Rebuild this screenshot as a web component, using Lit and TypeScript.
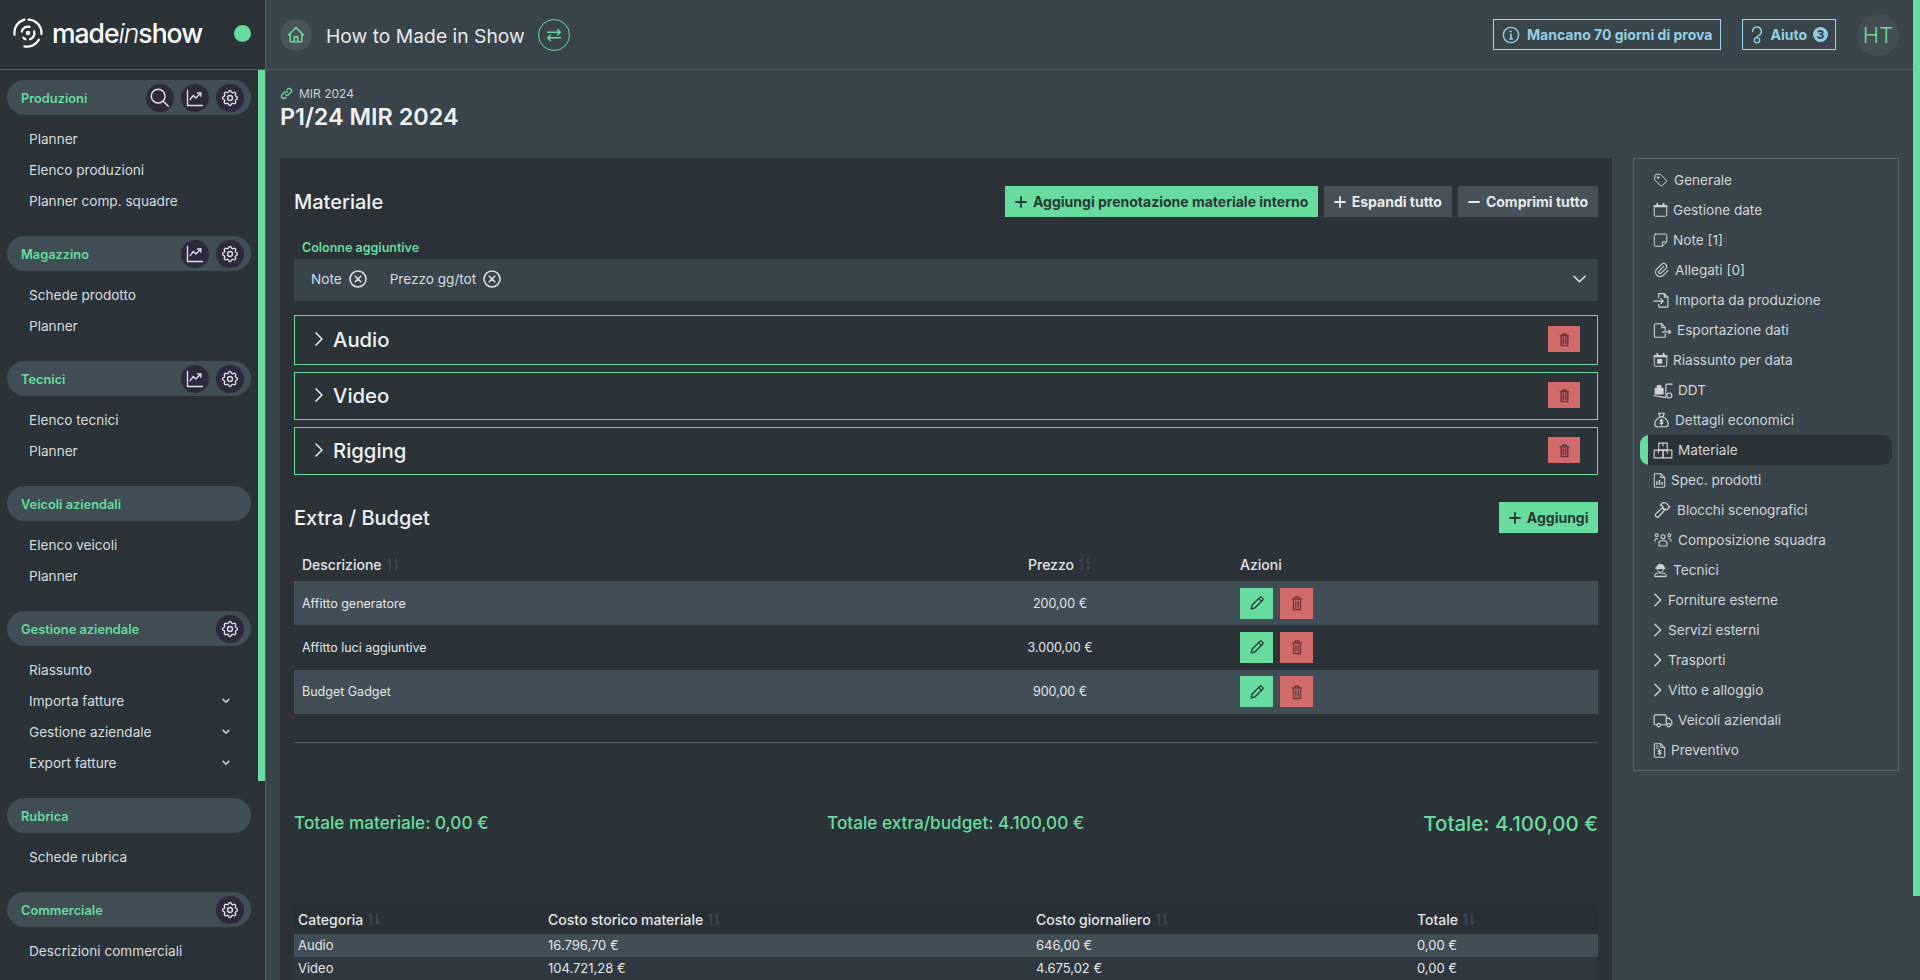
import { LitElement, html, css, svg } from "lit";
import { customElement } from "lit/decorators.js";

const ic = (vb: string, w: number, h: number, body: unknown, cls = "") =>
  html`<svg class="ic ${cls}" viewBox=${vb} width=${w} height=${h} fill="none" stroke="currentColor" stroke-linecap="round" stroke-linejoin="round">${body}</svg>`;

const gearP = svg`<path d="M10.325 4.317c.426-1.756 2.924-1.756 3.35 0a1.724 1.724 0 0 0 2.573 1.066c1.543-.94 3.31.826 2.37 2.37a1.724 1.724 0 0 0 1.065 2.572c1.756.426 1.756 2.924 0 3.35a1.724 1.724 0 0 0-1.066 2.573c.94 1.543-.826 3.31-2.37 2.37a1.724 1.724 0 0 0-2.572 1.065c-.426 1.756-2.924 1.756-3.35 0a1.724 1.724 0 0 0-2.573-1.066c-1.543.94-3.31-.826-2.37-2.37a1.724 1.724 0 0 0-1.065-2.572c-1.756-.426-1.756-2.924 0-3.35a1.724 1.724 0 0 0 1.066-2.573c-.94-1.543.826-3.31 2.37-2.37 1 .608 2.296.07 2.572-1.065z"/><circle cx="12" cy="12" r="3"/>`;
const gear = () => ic("0 0 24 24", 20, 20, gearP);
const chart = () => ic("0 0 24 24", 20, 20, svg`<path d="M3 3v18h18"/><path d="M6 14l4-5 3 3 6-6"/><path d="M15 6h4v4"/>`);
const search = () => ic("0 0 24 24", 22, 22, svg`<circle cx="10" cy="10" r="7.5"/><path d="M15.5 15.5L21 21"/>`);
const plus = () => ic("0 0 12 12", 12, 12, svg`<path d="M6 1v10M1 6h10"/>`, "s2");
const minus = () => ic("0 0 12 12", 12, 12, svg`<path d="M1 6h10"/>`, "s2");
const trash = (s = 16) => ic("0 0 16 16", s, s, svg`<path d="M3.500 4h9M6.200 4V2h3.600v2M4.500 4v10.500h7V4M6.800 6.500v5.500M9.200 6.500v5.500"/>`);
const pencil = () => ic("0 0 16 16", 16, 16, svg`<path d="M2.200 13.800l.8-3.600 7.800-7.800a1.300 1.300 0 0 1 1.900 0l.9.900a1.300 1.300 0 0 1 0 1.900l-7.800 7.800z"/><path d="M9.600 3.600l2.800 2.800"/>`);
const circX = () => ic("0 0 18 18", 18, 18, svg`<circle cx="9" cy="9" r="8"/><path d="M6.200 6.200l5.600 5.600M11.800 6.200l-5.600 5.600"/>`);
const sort = () => ic("0 0 14 14", 14, 14, svg`<path d="M4 12.500V2M4 2L2 4.200M10 1.500V12M10 12l2-2.200"/>`, "sort");
const chevR = (w = 10, h = 16) => ic("0 0 10 16", w, h, svg`<path d="M2 2l6 6-6 6"/>`);

const panelIcons: Record<string, [string, number, number, unknown]> = {
  tag: ["0 0 24 24", 15, 16, svg`<path d="M3 5a2 2 0 0 1 2-2h7l9 9a2 2 0 0 1 0 2.800l-6.200 6.200a2 2 0 0 1-2.800 0l-9-9z"/><circle cx="8" cy="8" r="1.400"/>`],
  cal: ["0 0 24 24", 15, 16, svg`<rect x="2" y="5" width="20" height="17" rx="2"/><path d="M7 2v4M17 2v4M2 6h20" stroke-width="3"/>`],
  note: ["0 0 24 24", 15, 16, svg`<path d="M4 2.500h16a2 2 0 0 1 2 2V15l-7 7H4a2 2 0 0 1-2-2V4.500a2 2 0 0 1 2-2z"/><path d="M22 15h-7v7"/>`],
  clip: ["0 0 24 24", 17, 18, svg`<path d="M15 7l-6.500 6.500a1.500 1.500 0 0 0 3 3l6.500-6.500a3 3 0 0 0-6-6l-6.500 6.500a4.500 4.500 0 0 0 9 9l6.500-6.500"/>`],
  imp: ["0 0 24 24", 17, 18, svg`<path d="M8 9V3h8l5 5v13a1 1 0 0 1-1 1H9a1 1 0 0 1-1-1v-3"/><path d="M16 3v5h5M1 13.500h13M11 10l3.500 3.500L11 17"/>`],
  exp: ["0 0 28 24", 19, 17, svg`<path d="M18 12V8l-5-6H4a2 2 0 0 0-2 2v16a2 2 0 0 0 2 2h14v-5"/><path d="M13 2v6h5M14 14h12M23 11l3.500 3-3.500 3"/>`],
  calp: ["0 0 24 24", 15, 16, svg`<rect x="2" y="5" width="20" height="17" rx="2"/><path d="M7 2v4M17 2v4M2 6h20" stroke-width="3"/><rect x="8" y="11" width="6" height="6" fill="currentColor"/>`],
  ddt: ["0 0 28 24", 20, 17, svg`<path d="M1 19l17 3M18 20V5q0-2 2-2h7"/><circle cx="23" cy="19" r="3.500"/><rect x="3" y="9" width="11" height="8" fill="currentColor"/><rect x="6" y="5" width="5" height="4" fill="currentColor"/>`],
  bag: ["0 0 24 24", 17, 18, svg`<path d="M8 2.500h8l-2 5h-4z"/><path d="M10 7.500C6 10 2.500 14 2.500 17.500a4 4 0 0 0 4 4h11a4 4 0 0 0 4-4c0-3.500-3.500-7.500-7.500-10"/><path d="M14 12.500c-.5-1-3.500-1.200-4 .4-.5 1.800 4 1.500 4 3.300-.2 1.500-3.500 1.500-4.200.3M12 11v8"/>`],
  box: ["0 0 28 24", 20, 17, svg`<rect x="8" y="1.500" width="12" height="10"/><rect x="1.500" y="11.500" width="12.500" height="11"/><rect x="14" y="11.500" width="12.500" height="11"/><path d="M14 1.500v4M7.500 11.500v4M20 11.500v4"/>`],
  spec: ["0 0 20 24", 13, 17, svg`<path d="M3 1.500h9l6 6V21a1.500 1.500 0 0 1-1.500 1.500h-13A1.500 1.500 0 0 1 2 21V2.500a1 1 0 0 1 1-1z"/><path d="M12 1.500v6h6"/><path d="M6 18v-4M10 18v-6M14 18v-3" stroke-width="2.200"/>`],
  ham: ["0 0 24 24", 19, 18, svg`<path d="M3 20l1 1a2 2 0 0 0 2.800 0L15 12l-3-3-9 8.200a2 2 0 0 0 0 2.800z"/><path d="M9 5.500L13 2c3 0 6 2 7 5l2 .5-4 4.500-2-1.500-1 1.500-3-3 .8-2z"/>`],
  team: ["0 0 28 24", 20, 16, svg`<circle cx="14" cy="7" r="3"/><circle cx="4.500" cy="5" r="2.200"/><circle cx="23.500" cy="5" r="2.200"/><path d="M8 21v-4a4 4 0 0 1 4-4h4a4 4 0 0 1 4 4v4zM2 14v-2a2 2 0 0 1 2-2h2M26 14v-2a2 2 0 0 0-2-2h-2"/>`],
  tec: ["0 0 24 24", 15, 18, svg`<path d="M6 9a6 6 0 0 1 12 0z" fill="currentColor"/><path d="M4 9h16M7 11c0 6 10 6 10 0"/><path d="M3 22v-1.500A3.500 3.500 0 0 1 6.500 17h11a3.500 3.500 0 0 1 3.500 3.500V22zM3 22h18"/>`],
  chev: ["0 0 10 16", 10, 14, svg`<path d="M1.500 1.500L8 8l-6.500 6.500"/>`],
  truck: ["0 0 28 24", 20, 17, svg`<path d="M5 18H3a1.500 1.500 0 0 1-1.500-1.500v-11A1.500 1.500 0 0 1 3 4h14a1.500 1.500 0 0 1 1.500 1.500V18H11M18.500 9H23l3.500 4v5H25M18.500 18H19"/><circle cx="8" cy="18.500" r="2.500"/><circle cx="22" cy="18.500" r="2.500"/>`],
  prev: ["0 0 20 24", 13, 17, svg`<path d="M3 1.500h9l6 6V21a1.500 1.500 0 0 1-1.500 1.500h-13A1.500 1.500 0 0 1 2 21V2.500a1 1 0 0 1 1-1z"/><path d="M12 1.500v6h6M5 5h3M5 8.500h3"/><path d="M12.500 12.500c-.5-1-4-1.200-4.500.3-.4 1.800 4.500 1.500 4.500 3.300-.2 1.500-4 1.500-4.800.3M10 11v8"/>`],
};

const panel: [string, string, number][] = [
  ["Generale", "tag", 6], ["Gestione date", "cal", 5], ["Note [1]", "note", 5], ["Allegati [0]", "clip", 5],
  ["Importa da produzione", "imp", 5], ["Esportazione dati", "exp", 5], ["Riassunto per data", "calp", 5],
  ["DDT", "ddt", 5], ["Dettagli economici", "bag", 5], ["Materiale", "box", 5], ["Spec. prodotti", "spec", 5],
  ["Blocchi scenografici", "ham", 5], ["Composizione squadra", "team", 5], ["Tecnici", "tec", 5],
  ["Forniture esterne", "chev", 5], ["Servizi esterni", "chev", 5], ["Trasporti", "chev", 5], ["Vitto e alloggio", "chev", 5],
  ["Veicoli aziendali", "truck", 5], ["Preventivo", "prev", 5],
];

interface Group { title: string; btns: string[]; items: [string, boolean][]; }
const i = (...n: string[]) => n.map((x) => [x, false] as [string, boolean]);
const groups: Group[] = [
  { title: "Produzioni", btns: ["s", "c", "g"], items: i("Planner", "Elenco produzioni", "Planner comp. squadre") },
  { title: "Magazzino", btns: ["c", "g"], items: i("Schede prodotto", "Planner") },
  { title: "Tecnici", btns: ["c", "g"], items: i("Elenco tecnici", "Planner") },
  { title: "Veicoli aziendali", btns: [], items: i("Elenco veicoli", "Planner") },
  { title: "Gestione aziendale", btns: ["g"], items: [["Riassunto", false], ["Importa fatture", true], ["Gestione aziendale", true], ["Export fatture", true]] },
  { title: "Rubrica", btns: [], items: i("Schede rubrica") },
  { title: "Commerciale", btns: ["g"], items: i("Descrizioni commerciali") },
];

@customElement("app-root")
export class AppRoot extends LitElement {
  static styles = css`
    :host { display: block; height: 980px; overflow: hidden; font-family: Inter, "Noto Sans", sans-serif; color: #e3e6e8; background: #3a444b; }
    * { box-sizing: border-box; }
    .ic { display: block; flex: none; stroke-width: 1.6; }
    .ic.s2 { stroke-width: 1.8; }
    .ic.sort { color: #474f56; stroke-width: 1.2; margin-left: 4px; }
    .app { display: grid; grid-template-columns: 266px 1fr; height: 980px; }

    .side { background: #2b3339; border-right: 1px solid #556067; display: flex; flex-direction: column; position: relative; overflow: hidden; }
    .brand { height: 70px; flex: none; border-bottom: 1px solid #556067; display: flex; align-items: center; padding: 0 14px 3px 13px; }
    .logotext { margin-left: 9px; font-size: 26.500px; font-weight: 500; letter-spacing: -1px; color: #fff; line-height: 30px; }
    .logotext i { font-weight: 300; }
    .dot { width: 17px; height: 17px; border-radius: 50%; background: #67dc9e; margin-left: auto; }
    .logo { flex: none; }
    .brandwrap { width: 238px; display: flex; align-items: center; }
    .nav { padding: 10px 0 0 7px; display: flex; flex-direction: column; gap: 20px; }
    .bar { position: absolute; left: 258px; top: 70px; width: 7px; height: 711px; background: #67dc9e; }
    .pill { width: 244px; height: 35px; border-radius: 18px; background: #414e55; display: flex; align-items: center; padding: 0 7px 0 14px; margin-bottom: 8px; }
    .pill b { color: #67dc9e; font-size: 12.800px; font-weight: 600; flex: 1; padding-top: 1px; }
    .pbtns { display: flex; gap: 7px; }
    .pbtn { width: 28px; height: 28px; border-radius: 50%; background: #2e2a3e; display: grid; place-items: center; color: #dfe2e4; }
    .item { height: 31px; display: flex; align-items: center; padding-left: 22px; font-size: 13.600px; color: #d8dcdf; width: 237px; justify-content: space-between; padding-right: 14px; }
    .item svg { color: #c9ced1; stroke-width: 2; }

    .main { position: relative; display: flex; flex-direction: column; min-width: 0; }
    .top { height: 70px; flex: none; border-bottom: 1px solid #556067; display: flex; align-items: center; padding: 0 14px 0 14px; margin-right: 7px; }
    .home { width: 32px; height: 32px; border-radius: 50%; background: #4a5459; display: grid; place-items: center; color: #67dc9e; }
    .ttl { font-size: 19.300px; margin: 2px 13px 0 14px; color: #e6e9eb; }
    .swap { width: 32px; height: 32px; border-radius: 50%; border: 1px solid #67dc9e; display: grid; place-items: center; color: #67dc9e; }
    .spacer { flex: 1; }
    .info { height: 31px; border: 1px solid #9bd7ec; color: #93cfe3; display: flex; align-items: center; padding: 0 8px; font-size: 14px; font-weight: 700; gap: 7px; }
    .aiuto { margin-left: 21px; padding: 0 7px; gap: 6px; }
    .badge3 { width: 15px; height: 15px; border-radius: 50%; background: #93cfe3; color: #3a444b; font-size: 12px; font-weight: 800; display: grid; place-items: center; line-height: 1; }
    .avatar { width: 42px; height: 42px; border-radius: 50%; background: #434d53; color: #67dc9e; display: grid; place-items: center; font-size: 22px; font-weight: 300; margin-left: 21px; }
    .sbar { position: absolute; right: 0; top: 0; width: 7px; height: 896px; background: #67dc9e; }

    .body { padding: 14px 14px 0 14px; flex: 1; min-height: 0; overflow: hidden; margin-right: 7px; }
    .crumb { display: flex; align-items: center; gap: 6px; font-size: 12px; color: #ccd1d4; height: 16px; margin-top: 1px; }
    .crumb svg { color: #67dc9e; }
    h1 { font-size: 23.400px; font-weight: 600; line-height: 30px; margin: 1px 0 26px; color: #f0f2f3; }
    .cols { display: grid; grid-template-columns: 1332px 266px; gap: 21px; align-items: start; }

    .card { background: #2b3339; padding: 28px 14px 0; height: 822px; overflow: hidden; }
    .row { display: flex; align-items: center; justify-content: space-between; }
    h2 { font-size: 20px; font-weight: 500; margin: 0; color: #eff1f2; }
    .btns { display: flex; gap: 6px; }
    .btn { height: 31px; display: flex; align-items: center; gap: 6px; padding: 0 9.500px; font-size: 14px; font-weight: 700; white-space: nowrap; }
    .green { background: #67dc9e; color: #263a33; }
    .grey { background: #485058; color: #e6e9eb; padding: 0 10px; }
    .lab { font-size: 12.500px; font-weight: 600; color: #67dc9e; padding-left: 8px; line-height: 15px; margin: 23px 0 4px; }
    .sel { height: 42px; background: #3a444b; display: flex; align-items: center; padding: 0 12px 2px 17px; font-size: 13.600px; color: #d8dcdf; margin-bottom: 14px; }
    .sel .tag { display: flex; align-items: center; gap: 7px; margin-right: 23px; }
    .sel .caret { margin-left: auto; color: #e3e6e8; }
    .acc { display: flex; flex-direction: column; gap: 7px; }
    .acc > div { height: 48px; border: 1px solid #67dc9e; display: flex; align-items: center; padding: 0 17px 2px 19px; }
    .acc > div:first-child { height: 50px; }
    .acc b { font-size: 20.300px; font-weight: 500; margin-left: 9px; flex: 1; color: #eff1f2; }
    .red { background: #d16a6a; color: #6a373b; display: grid; place-items: center; }
    .del { width: 32px; height: 26px; }
    .ex { margin-top: 27px; }
    .thead1 { display: grid; grid-template-columns: 725px 82px 1fr; height: 34px; align-items: center; margin-top: 14px; font-size: 14px; font-weight: 500; }
    .th { display: flex; align-items: center; }
    .th.c { justify-content: center; }
    .t1 { display: grid; grid-template-columns: 725px 82px 1fr; height: 44.330px; align-items: center; font-size: 12.500px; color: #e3e6e8; }
    .t1.odd { background: #414e55; }
    .pad { padding-left: 8px; }
    .cc { white-space: nowrap; display: flex; justify-content: center; }
    .az { padding-left: 139px; display: flex; gap: 7px; }
    .act { width: 33px; height: 31px; display: grid; place-items: center; }
    .act .ic { stroke-width: 1.300; }
    .act.green { color: #1f3a2f; }
    hr { border: 0; border-top: 1px solid #4f5960; margin: 28px 0 0; }
    .tot { display: grid; grid-template-columns: 533px 1fr auto; align-items: center; height: 41px; margin-top: 59px; color: #67dc9e; font-size: 17.200px; font-weight: 500; }
    .tot .big { font-size: 20.500px; font-weight: 500; padding-top: 2px; }
    .t2 { display: grid; grid-template-columns: 250px 488px 381px 1fr; align-items: center; padding-left: 4px; font-size: 13px; height: 23px; }
    .t2.head { height: 29px; margin-top: 62px; background: #293036; font-size: 14px; font-weight: 500; }
    .t2.a { background: #414e55; }
    .t2.b { background: #2f383e; }
    .t2 > div { display: flex; align-items: center; }

    .panel { border: 1px solid #5a656c; height: 613px; padding: 6px 6px 0; font-size: 13.600px; color: #cfd4d7; }
    .pi { height: 30px; display: flex; align-items: center; padding-left: 13px; white-space: nowrap; position: relative; }
    .pi.on { background: #2b3339; border-radius: 9px; overflow: hidden; }
    .pi.on::before { content: ""; position: absolute; left: 0; top: 0; bottom: 0; width: 8px; background: #67dc9e; }
    .pgap { display: flex; }
  `;

  private group(g: Group) {
    const m: Record<string, () => unknown> = { s: search, c: chart, g: gear };
    return html`<div>
      <div class="pill"><b>${g.title}</b>
        <div class="pbtns">${g.btns.map((b) => html`<div class="pbtn">${m[b]()}</div>`)}</div>
      </div>
      ${g.items.map(([t, c]) => html`<div class="item"><span>${t}</span>${c ? ic("0 0 10 10", 8, 8, svg`<path d="M1.500 3L5 6.500 8.500 3"/>`) : ""}</div>`)}
    </div>`;
  }

  private panelItem([t, k, gap]: [string, string, number]) {
    const [vb, w, h, body] = panelIcons[k];
    return html`<div class="pi ${t === "Materiale" ? "on" : ""}">
      <span class="pgap" style="margin-right:${gap}px">${ic(vb, w, h, body)}</span>${t}
    </div>`;
  }

  render() {
    return html`<div class="app">
      <aside class="side">
        <div class="brand"><div class="brandwrap">
          <svg class="logo" width="30" height="30" viewBox="0 0 29 29" fill="none" stroke="#fff" stroke-width="2.200" stroke-linecap="round">
            <circle cx="14.500" cy="14.500" r="2.200" fill="#fff" stroke="none"/>
            <path d="M8.500 13a6.200 6.200 0 0 1 7.500-4.500M20.500 13a6.200 6.200 0 0 1-4 7.500M12 20.500a6.500 6.500 0 0 1-2-1.500"/>
            <path d="M1.500 16a13 13 0 0 1 9.500-14.500M15 1.500a13 13 0 0 1 12.500 14M25 21a13 13 0 0 1-14 6.500"/>
          </svg>
          <span class="logotext">made<i>in</i>show</span>
          <span class="dot"></span>
        </div></div>
        <nav class="nav">${groups.map((g) => this.group(g))}</nav>
        <div class="bar"></div>
      </aside>
      <main class="main">
        <header class="top">
          <div class="home">${ic("0 0 24 24", 20, 20, svg`<path d="M3 12l9-9 9 9M5 10v10h14V10M10 20v-6h4v6" stroke-width="1.800"/>`)}</div>
          <span class="ttl">How to Made in Show</span>
          <div class="swap">${ic("0 0 20 20", 18, 18, svg`<path d="M3 7h14M14 4l3 3-3 3M17 13H3M6 10l-3 3 3 3"/>`)}</div>
          <span class="spacer"></span>
          <div class="info">${ic("0 0 20 20", 18, 18, svg`<circle cx="10" cy="10" r="8.500"/><path d="M10 9v5M8.500 14.500h3M9 6h1" stroke-width="1.800"/>`)}Mancano 70 giorni di prova</div>
          <div class="info aiuto">${ic("0 0 16 20", 14, 18, svg`<path d="M3 6a5 5 0 1 1 7 4.500c-1.200.7-2 1.500-2 2.500"/><circle cx="8" cy="16" r="3"/>`)}Aiuto<span class="badge3">3</span></div>
          <div class="avatar">HT</div>
        </header>
        <div class="body">
          <div class="crumb">${ic("0 0 24 24", 13, 13, svg`<path d="M10 14a4 4 0 0 0 6 0l4-4a4 4 0 0 0-6-6l-1 1M14 10a4 4 0 0 0-6 0l-4 4a4 4 0 0 0 6 6l1-1" stroke-width="2.400"/>`)}MIR 2024</div>
          <h1>P1/24 MIR 2024</h1>
          <div class="cols">
            <section class="card">
              <div class="row"><h2>Materiale</h2>
                <div class="btns">
                  <div class="btn green">${plus()}Aggiungi prenotazione materiale interno</div>
                  <div class="btn grey">${plus()}Espandi tutto</div>
                  <div class="btn grey">${minus()}Comprimi tutto</div>
                </div>
              </div>
              <div class="lab">Colonne aggiuntive</div>
              <div class="sel">
                <span class="tag">Note ${circX()}</span>
                <span class="tag">Prezzo gg/tot ${circX()}</span>
                <span class="caret">${ic("0 0 14 8", 13, 8, svg`<path d="M1 1l6 6 6-6"/>`)}</span>
              </div>
              <div class="acc">
                ${["Audio", "Video", "Rigging"].map((t) => html`<div>${chevR()}<b>${t}</b><span class="red del">${trash(15)}</span></div>`)}
              </div>
              <div class="row ex"><h2>Extra / Budget</h2><div class="btn green">${plus()}Aggiungi</div></div>
              <div class="thead1">
                <div class="th pad">Descrizione${sort()}</div>
                <div class="th c">Prezzo${sort()}</div>
                <div class="th" style="padding-left:139px">Azioni</div>
              </div>
              ${[["Affitto generatore", "200,00 €"], ["Affitto luci aggiuntive", "3.000,00 €"], ["Budget Gadget", "900,00 €"]].map(([a, b], n) => html`
                <div class="t1 ${n % 2 ? "" : "odd"}">
                  <div class="pad">${a}</div><div class="cc">${b}</div>
                  <div class="az"><span class="act green">${pencil()}</span><span class="act red">${trash()}</span></div>
                </div>`)}
              <hr />
              <div class="tot"><span>Totale materiale: 0,00 €</span><span>Totale extra/budget: 4.100,00 €</span><span class="big">Totale: 4.100,00 €</span></div>
              <div class="t2 head">
                <div>Categoria${sort()}</div><div>Costo storico materiale${sort()}</div><div>Costo giornaliero${sort()}</div><div>Totale${sort()}</div>
              </div>
              <div class="t2 a"><div>Audio</div><div>16.796,70 €</div><div>646,00 €</div><div>0,00 €</div></div>
              <div class="t2 b"><div>Video</div><div>104.721,28 €</div><div>4.675,02 €</div><div>0,00 €</div></div>
            </section>
            <aside class="panel">${panel.map((p) => this.panelItem(p))}</aside>
          </div>
        </div>
        <div class="sbar"></div>
      </main>
    </div>`;
  }
}
